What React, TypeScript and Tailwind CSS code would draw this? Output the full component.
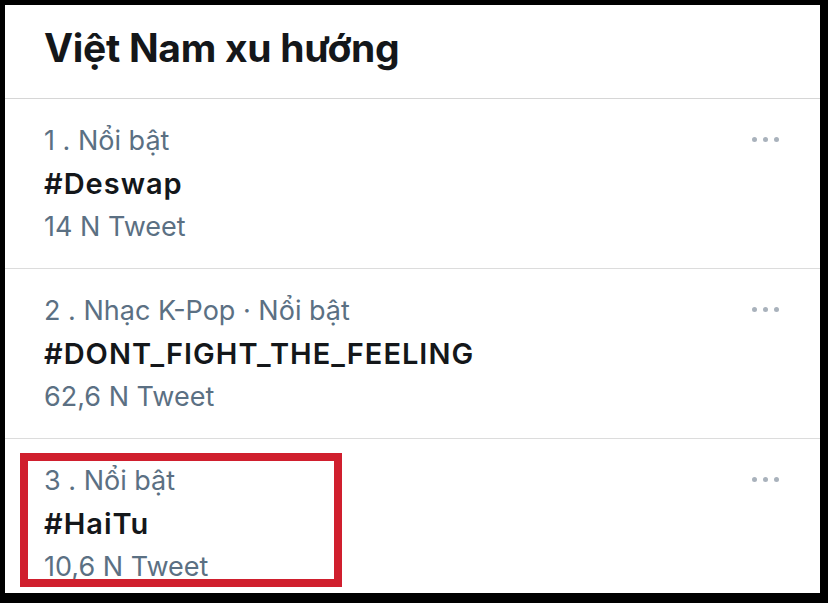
interface Trend {
	rank: number;
	context: string;
	tag: string;
	count: string;
}

const trends: Trend[] = [
	{ rank: 1, context: "Nổi bật", tag: "#Deswap", count: "14 N Tweet" },
	{ rank: 2, context: "Nhạc K-Pop · Nổi bật", tag: "#DONT_FIGHT_THE_FEELING", count: "62,6 N Tweet" },
	{ rank: 3, context: "Nổi bật", tag: "#HaiTu", count: "10,6 N Tweet" },
];

function Dots() {
	return (
		<div className="mt-[18px] flex gap-[6px]">
			<span className="block w-[5px] h-[5px] rounded-full bg-[#a9b2bc]" />
			<span className="block w-[5px] h-[5px] rounded-full bg-[#a9b2bc]" />
			<span className="block w-[5px] h-[5px] rounded-full bg-[#a9b2bc]" />
		</div>
	);
}

export default function App() {
	return (
		<div
			className="w-[828px] h-[603px] bg-black pt-[5px] pl-[5px] pr-[8px] pb-[10px] overflow-hidden"
			style={{ fontFamily: "Inter, 'Noto Sans', sans-serif" }}
		>
			<div className="relative h-full bg-white overflow-hidden">
				<div className="h-[94px] pt-[18px] pl-[39px] border-b border-[#d6d6d6]">
					<h1 className="text-[39px] leading-[50px] font-bold text-[#14171a] tracking-[-0.3px]">
						Việt Nam xu hướng
					</h1>
				</div>

				{trends.map((t) => (
					<div
						key={t.rank}
						className="flex justify-between pl-[39px] pr-[41px] pt-[20px] pb-[20px] border-b border-[#dcdcdc]"
					>
						<div className="text-[27px] leading-[43px]">
							<p className="text-[#5b7083]">
								{t.rank} . {t.context}
							</p>
							<p className="text-[29px] font-semibold tracking-[1px] text-[#14171a]">{t.tag}</p>
							<p className="text-[#5b7083]">{t.count}</p>
						</div>
						<Dots />
					</div>
				))}

				{/* highlight around the third trend */}
				<div className="absolute left-[15px] top-[448px] w-[322px] h-[134px] border-[8px] border-[#d01f2e]" />
			</div>
		</div>
	);
}
